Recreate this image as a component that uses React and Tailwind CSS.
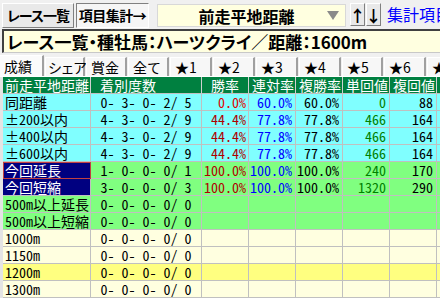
const rows = [
  { name: '同距離', rec: '0- 3- 0- 2/ 5', win: '0.0%', ren: '60.0%', fuku: '60.0%', tan: '0', fk: '88', bg: 'bg-[#80ffff]' },
  { name: '±200以内', rec: '4- 3- 0- 2/ 9', win: '44.4%', ren: '77.8%', fuku: '77.8%', tan: '466', fk: '164', bg: 'bg-[#80ffff]' },
  { name: '±400以内', rec: '4- 3- 0- 2/ 9', win: '44.4%', ren: '77.8%', fuku: '77.8%', tan: '466', fk: '164', bg: 'bg-[#80ffff]' },
  { name: '±600以内', rec: '4- 3- 0- 2/ 9', win: '44.4%', ren: '77.8%', fuku: '77.8%', tan: '466', fk: '164', bg: 'bg-[#80ffff]' },
  { name: '今回延長', rec: '1- 0- 0- 0/ 1', win: '100.0%', ren: '100.0%', fuku: '100.0%', tan: '240', fk: '170', bg: 'bg-[#80ff80]', sel: 'focus' },
  { name: '今回短縮', rec: '3- 0- 0- 0/ 3', win: '100.0%', ren: '100.0%', fuku: '100.0%', tan: '1320', fk: '290', bg: 'bg-[#80ff80]', sel: 'on' },
  { name: '500m以上延長', rec: '0- 0- 0- 0/ 0', bg: 'bg-[#80ff80]' },
  { name: '500m以上短縮', rec: '0- 0- 0- 0/ 0', bg: 'bg-[#80ff80]' },
  { name: '1000m', rec: '0- 0- 0- 0/ 0', bg: 'bg-[#ffffe0]' },
  { name: '1150m', rec: '0- 0- 0- 0/ 0', bg: 'bg-[#ffffe0]' },
  { name: '1200m', rec: '0- 0- 0- 0/ 0', bg: 'bg-[#ffff80]' },
  { name: '1300m', rec: '0- 0- 0- 0/ 0', bg: 'bg-[#ffffe0]' },
];

const tabs = [
  { label: '成績', w: 'w-[44px]', t: 'pl-[4px] overflow-hidden' },
  { label: 'シェア', w: 'w-[40px]', t: 'pl-[2px] text-[13px] tracking-[-1.5px]' },
  { label: '賞金', w: 'w-[41px]', t: 'pl-[4px] overflow-hidden' },
  { label: '全て', w: 'w-[41px]', t: 'pl-[4px] overflow-hidden' },
  { label: '★1', w: 'w-[42px]', t: 'pl-[4px] overflow-hidden' },
  { label: '★2', w: 'w-[42px]', t: 'pl-[4px] overflow-hidden' },
  { label: '★3', w: 'w-[42px]', t: 'pl-[4px] overflow-hidden' },
  { label: '★4', w: 'w-[42px]', t: 'pl-[4px] overflow-hidden' },
  { label: '★5', w: 'w-[41px]', t: 'pl-[4px] overflow-hidden' },
  { label: '★6', w: 'w-[42px]', t: 'pl-[4px] overflow-hidden' },
  { label: '★7', w: 'w-[42px]', t: 'pl-[4px] overflow-hidden' },
];

const cell = 'h-[17px] border-r border-b border-[#c0c0c0] overflow-hidden whitespace-pre leading-[16px]';
const raised = 'bg-[#e9e9e9] border border-t-white border-l-white border-r-[#808080] border-b-[#808080]';

export default function App() {
  return (
    <div className="w-[440px] h-[298px] overflow-hidden bg-[#f0f0f0] font-['Noto_Sans_Mono_CJK_JP','Noto_Sans_CJK_JP',monospace] text-[14px] text-black">
      {/* top toolbar */}
      <div className="h-[29px] flex items-start pt-[3px] pl-[2px] whitespace-nowrap font-['Noto_Sans_CJK_JP',sans-serif] [font-feature-settings:'palt']">
        <div className={`shrink-0 w-[72px] h-[25px] ${raised} flex items-center justify-center font-bold text-[14px] tracking-[-1px]`}>
          レース一覧
        </div>
        <div className="shrink-0 ml-[2px] w-[73px] h-[25px] bg-[#f6f6f6] border border-t-[#808080] border-l-[#808080] border-r-white border-b-white flex items-center justify-center font-bold text-[14px] tracking-[-0.5px]">
          項目集計→
        </div>
        <div className="shrink-0 ml-[8px] mt-[1px] w-[189px] h-[23px] bg-[#ffffe0] border border-[#d8d8d8] flex items-center">
          <span className="flex-1 text-center font-bold text-[16px] pl-[8px]">前走平地距離</span>
          <svg width="12" height="9" viewBox="0 0 12 9" className="mr-[6px]">
            <path d="M0 0h12L6 9z" fill="#8a8a8a" />
          </svg>
        </div>
        <div className={`shrink-0 ml-[4px] w-[15px] h-[23px] ${raised} font-bold text-[16px] flex items-center justify-center`}>↑</div>
        <div className={`shrink-0 ml-[1px] w-[15px] h-[23px] ${raised} font-bold text-[16px] flex items-center justify-center`}>↓</div>
        <span className="shrink-0 ml-[6px] text-[16px] leading-[22px] text-[#0000ff]">集計項目&gt;</span>
      </div>

      {/* title */}
      <div className="ml-[2px] h-[24px] bg-[#ffffe0] border-t-2 border-l-2 border-t-[#404040] border-l-[#404040] border-b border-b-[#c8c8c8] flex items-center pl-[3px] font-bold text-[17px] whitespace-nowrap overflow-hidden font-['Noto_Sans_CJK_JP',sans-serif] [font-feature-settings:'palt']">
        レース一覧・種牡馬：ハーツクライ／距離：1600m
      </div>

      {/* tabs */}
      <div className="mt-[2px] h-[22px] flex items-end border-b border-white whitespace-nowrap font-['Noto_Sans_CJK_JP',sans-serif]">
        {tabs.map((t, i) => (
          <div
            key={t.label}
            className={`${t.w} shrink-0 ${i === 0 ? 'h-[21px] bg-[#fbfbfb] border-l-0' : 'h-[19px] bg-[#f7f7f7] border-l border-l-white ml-[1px]'} border-t border-t-white border-r-2 border-r-[#a0a0a0] flex items-center text-[14px] leading-[16px] ${t.t}`}
          >
            {t.label}
          </div>
        ))}
      </div>

      {/* table */}
      <div className="pl-[3px] bg-[#e4e4e4]">
        <div className="grid grid-cols-[88px_111px_47px_47px_47px_47px_47px_1fr]">
          <div className={`${cell} bg-[#008040] text-white pl-[2px] border-r-[#d0d0d0]`}>前走平地距離</div>
          <div className={`${cell} bg-[#008040] text-white pl-[9px] border-r-[#d0d0d0]`}>着別度数</div>
          <div className={`${cell} bg-[#008040] text-white pl-[9px] border-r-[#d0d0d0]`}>勝率</div>
          <div className={`${cell} bg-[#008040] text-white pl-[3px] border-r-[#d0d0d0]`}>連対率</div>
          <div className={`${cell} bg-[#008040] text-white pl-[3px] border-r-[#d0d0d0]`}>複勝率</div>
          <div className={`${cell} bg-[#008040] text-white pl-[3px] border-r-[#d0d0d0]`}>単回値</div>
          <div className={`${cell} bg-[#008040] text-white pl-[3px] border-r-[#d0d0d0]`}>複回値</div>
          <div className={`${cell} bg-[#008040] border-r-0`}></div>

          {rows.map((r) => (
            <Row key={r.name} r={r} />
          ))}
        </div>
      </div>
    </div>
  );
}

function Row({ r }) {
  const nameCls = r.sel
    ? `bg-[#000080] text-white ${r.sel === 'focus' ? 'outline outline-1 -outline-offset-1 outline-[#c04040]' : ''}`
    : r.bg;
  return (
    <>
      <div className={`${cell} ${nameCls} pl-[2px]`}>{r.name}</div>
      <div className={`${cell} ${r.bg} text-center`}>{r.rec}</div>
      <div className={`${cell} ${r.bg} text-right pr-[2px] ${r.win === '0.0%' ? 'text-[#e00000]' : 'text-[#b00000]'}`}>{r.win || ''}</div>
      <div className={`${cell} ${r.bg} text-right pr-[3px] text-[#0000ff]`}>{r.ren || ''}</div>
      <div className={`${cell} ${r.bg} text-right pr-[3px]`}>{r.fuku || ''}</div>
      <div className={`${cell} ${r.bg} text-right pr-[3px] text-[#008000]`}>{r.tan || ''}</div>
      <div className={`${cell} ${r.bg} text-right pr-[3px]`}>{r.fk || ''}</div>
      <div className={`${cell} ${r.bg} border-r-0`}></div>
    </>
  );
}
